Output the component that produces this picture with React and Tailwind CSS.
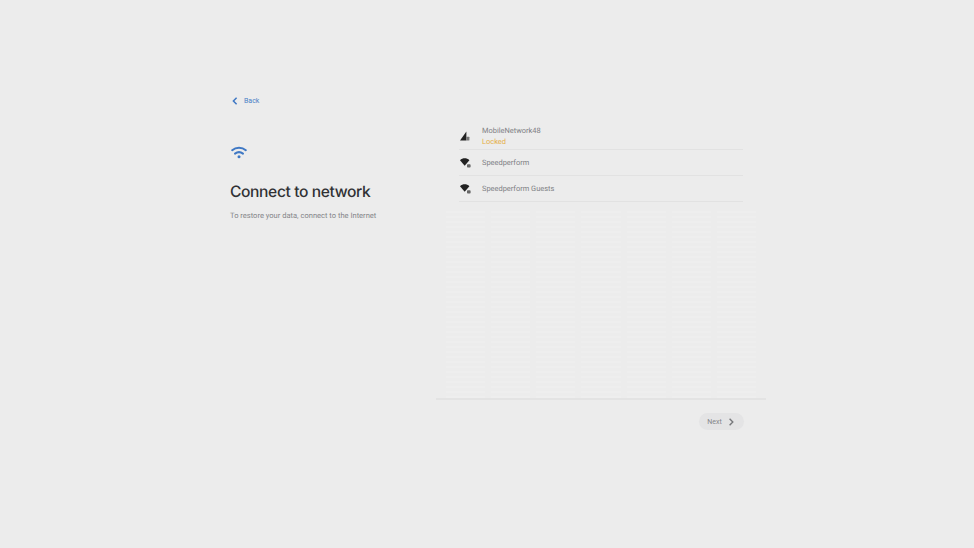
import React from 'react'

function WifiIcon(){
  return (
    <svg width="16" height="13" viewBox="0 0 16 13" fill="none" stroke="#3f78c4" strokeWidth="2" strokeLinecap="round">
      <path d="M1.2 4.2C5 1 11 1 14.8 4.2" />
      <path d="M4 7.6C6.4 5.8 9.6 5.8 12 7.6" />
      <circle cx="8" cy="10.8" r="1.5" fill="#3f78c4" stroke="none" />
    </svg>
  )
}

function LockedWifi(){
  return (
    <svg width="11" height="10" viewBox="0 0 11 10">
      <path d="M0 2.2C2.6 -0.4 6.8 -0.4 9.4 2.2L4.7 7.8Z" fill="#222" />
      <rect x="7" y="6.2" width="3.6" height="3.4" rx="0.8" fill="#666" />
    </svg>
  )
}

function CellIcon(){
  return (
    <svg width="10" height="10" viewBox="0 0 10 10">
      <path d="M0 9.4L6.4 0.6V9.4Z" fill="#222" />
      <rect x="6.4" y="5.8" width="3" height="3.6" rx="0.5" fill="#777" />
    </svg>
  )
}

function Row({icon, name, sub}){
  return (
    <div className={`flex items-center border-b border-[#e2e2e2] ${sub ? 'h-[28px]' : 'h-[26px]'}`}>
      <div className="w-[23px] pl-[1px] flex items-center shrink-0">{icon}</div>
      <div className={`flex flex-col ${sub ? 'pt-[1px]' : 'pb-[1px]'}`}>
        <div className="text-[7.45px] leading-[11px] text-[#808185] whitespace-nowrap">{name}</div>
        {sub && <div className="text-[7.45px] leading-[11px] text-[#e5b04a]">{sub}</div>}
      </div>
    </div>
  )
}

export default function App(){
  const stripes = [0,1,2,3,4,5,6]
  return (
    <div className="w-[974px] h-[548px] bg-[#ececec] overflow-hidden flex justify-center font-['Roboto',sans-serif] [text-rendering:geometricPrecision]">
      <div className="w-[514px] pt-[94px] flex flex-col">
        <button className="flex items-center gap-[4px] h-[13px] text-[#4a7fc6] text-[7px] w-fit">
          <svg width="10" height="10" viewBox="0 0 10 10" fill="none" stroke="#3f78c4" strokeWidth="1.5"><path d="M6.6 1.8L3.4 5L6.6 8.2" /></svg>
          <span className="pt-[1px]">Back</span>
        </button>
        <div className="flex">
          <div className="w-[206px] shrink-0 pt-[39px]">
            <div className="pl-[1px]"><WifiIcon /></div>
            <h1 className="mt-[21px] text-[15.6px] leading-[24px] tracking-[-0.38px] font-medium text-[#303134] font-['Inter',sans-serif]">Connect to network</h1>
            <p className="mt-[6px] text-[7.55px] leading-[12px] text-[#85868a] whitespace-nowrap">To restore your data, connect to the Internet</p>
          </div>
          <div className="flex-1">
            <div className="w-[330px]">
              <div className="px-[23px] pt-[15px]">
                <Row icon={<CellIcon />} name="MobileNetwork48" sub="Locked" />
                <Row icon={<LockedWifi />} name="Speedperform" />
                <Row icon={<LockedWifi />} name="Speedperform Guests" />
              </div>
              <div className="h-[198px] border-b-2 border-[#e3e3e3] px-[10px] pt-[8px] flex gap-[6px]">
                {stripes.map(i => (
                  <div key={i} className="flex-1 h-full bg-[repeating-linear-gradient(0deg,#eeeeee_0px,#eeeeee_2px,#ececec_2px,#ececec_5px)]" />
                ))}
              </div>
            </div>
            <div className="w-[308px] mt-[13px] flex justify-end">
              <button className="h-[17px] w-[45px] rounded-full bg-[#e4e4e5] flex items-center justify-center gap-[4px] text-[7px] text-[#85868a]">
                <span className="pt-[1px]">Next</span>
                <svg width="10" height="10" viewBox="0 0 10 10" fill="none" stroke="#77787b" strokeWidth="1.4"><path d="M3.6 1.8L6.8 5L3.6 8.2" /></svg>
              </button>
            </div>
          </div>
        </div>
      </div>
    </div>
  )
}
